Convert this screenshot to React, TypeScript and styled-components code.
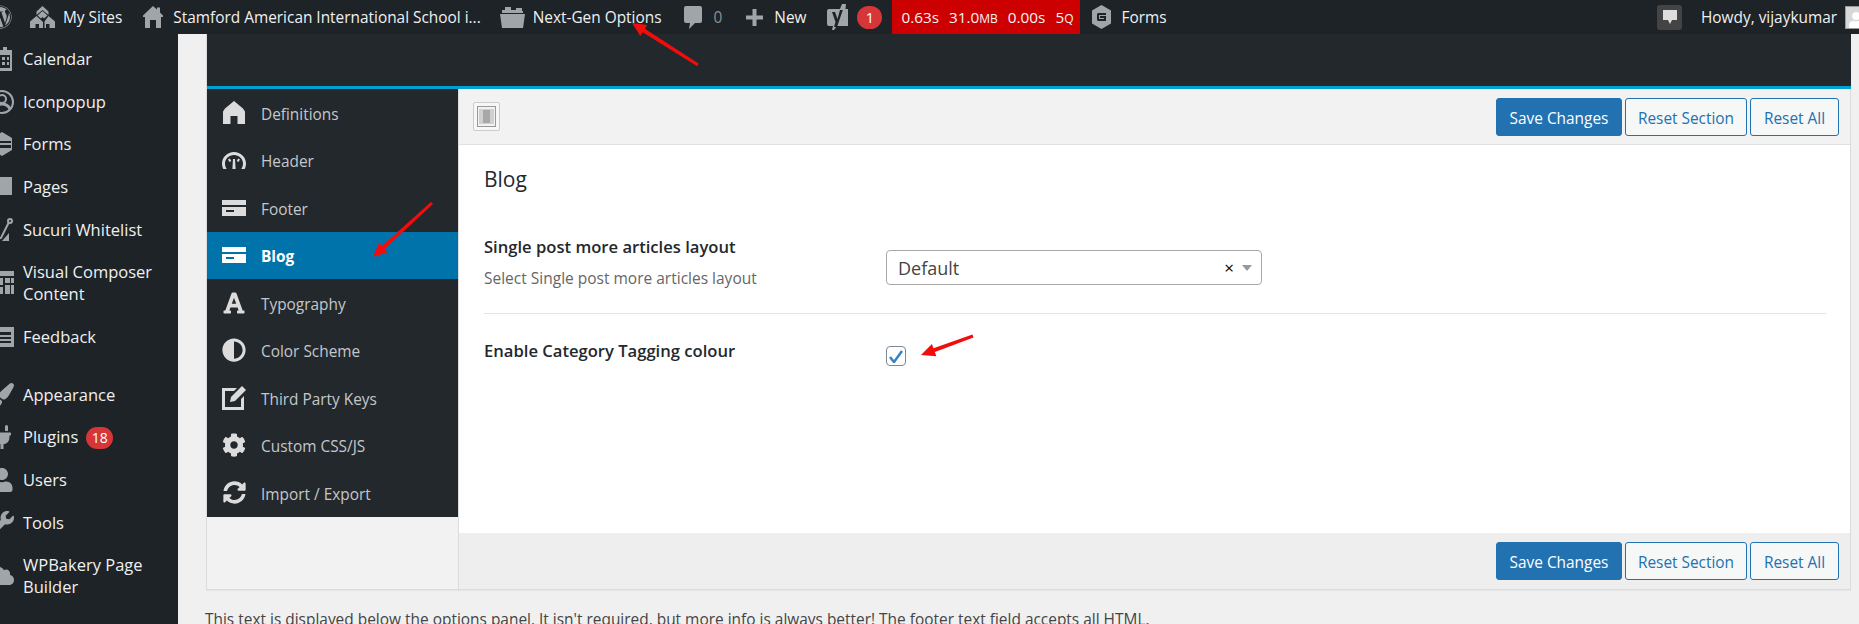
import React from 'react';
import styled, { createGlobalStyle } from 'styled-components';
import { FaWordpress, FaPlug, FaUser, FaWrench, FaCloud, FaPaintBrush, FaCog, FaSyncAlt, FaFont, FaAdjust } from 'react-icons/fa';

const colors = {
    bar: '#1d2327',
    dark: '#23282d',
    grey: '#a0a5aa',
    blue: '#2271b1',
    active: '#0073aa',
    line: '#e0e0e0',
    page: '#f0f0f0',
};

const GlobalStyle = createGlobalStyle`
    html, body {
        margin: 0;
        padding: 0;
        background: ${colors.page};
    }
    * {
        box-sizing: border-box;
    }
`;

const Page = styled.div`
    position: relative;
    width: 1859px;
    height: 624px;
    overflow: hidden;
    display: flex;
    flex-direction: column;
    font-family: "Open Sans", "Noto Sans", sans-serif;
    font-size: 15.4px;
`;

const AdminBar = styled.header`
    height: 34px;
    flex: none;
    display: flex;
    align-items: center;
    background: ${colors.bar};
    color: #f0f0f1;
`;

const BarItem = styled.div<{ $ml?: number; $end?: boolean }>`
    display: flex;
    align-items: center;
    flex: none;
    white-space: nowrap;
    margin-left: ${(p) => (p.$end ? 'auto' : `${p.$ml || 0}px`)};
`;

const BarClip = styled.div`
    width: 12px;
    height: 34px;
    overflow: hidden;
    display: flex;
    align-items: center;
    justify-content: flex-end;
    color: ${colors.grey};
    flex: none;

    svg {
        flex: none;
    }
`;

const BarIcon = styled.svg`
    display: block;
    flex: none;
    fill: ${colors.grey};
`;

const BarText = styled.span<{ $ml?: number; $dim?: boolean }>`
    margin-left: ${(p) => p.$ml || 0}px;
    color: ${(p) => (p.$dim ? '#8c8f94' : '#f0f0f1')};
`;

const CountBadge = styled.span`
    width: 25px;
    height: 23px;
    margin-left: 9px;
    border-radius: 12px;
    background: #d63638;
    color: #fff;
    display: flex;
    align-items: center;
    justify-content: center;
    font-size: 14.5px;
`;

const PerfBox = styled.div`
    width: 188px;
    height: 34px;
    margin-left: 10px;
    padding-left: 9px;
    background: #cc0000;
    display: flex;
    align-items: center;
    flex: none;
    gap: 10px;
    color: #f4f4f4;
    font-size: 15.3px;
    white-space: nowrap;
`;

const SmallCaps = styled.span`
    font-size: 12px;
`;

const ChatButton = styled.div`
    width: 25px;
    height: 25px;
    border-radius: 3px;
    background: #444;
    display: flex;
    align-items: center;
    justify-content: center;
    flex: none;
`;

const Avatar = styled.div`
    width: 14px;
    height: 23px;
    margin-left: 8px;
    flex: none;
    overflow: hidden;
    background: #d8d8d8;
    border: 1px solid #999;
    border-right: none;
    color: #fff;
    display: flex;
    align-items: flex-end;
    padding-left: 2px;

    svg {
        flex: none;
    }
`;

const Layout = styled.div`
    flex: 1;
    display: flex;
    min-height: 0;
`;

const Sidebar = styled.nav`
    width: 178px;
    flex: none;
    background: ${colors.bar};
    padding-top: 4px;
    overflow: hidden;
`;

const SideRow = styled.div<{ $tall?: boolean; $gap?: boolean }>`
    height: ${(p) => (p.$tall ? 65 : 42.6)}px;
    margin-top: ${(p) => (p.$gap ? 15 : 0)}px;
    display: flex;
    align-items: center;
    color: #f0f0f1;
    font-size: 16.5px;
    line-height: 22px;
`;

const SideIcon = styled.div`
    width: 14px;
    height: 24px;
    flex: none;
    overflow: hidden;
    color: ${colors.grey};
    display: flex;
    align-items: center;
    justify-content: flex-end;
    margin-right: 9px;
    align-self: center;

    svg {
        flex: none;
        display: block;
    }
`;

const SideLabel = styled.span`
    width: 140px;
`;

const PluginBadge = styled.span`
    display: inline-flex;
    width: 27px;
    height: 22px;
    margin-left: 8px;
    border-radius: 11px;
    background: #d63638;
    color: #fff;
    font-size: 14px;
    align-items: center;
    justify-content: center;
    vertical-align: middle;
`;

const Main = styled.main`
    flex: 1;
    min-width: 0;
    padding: 0 8px 0 28px;
`;

const Panel = styled.section`
    width: 1645px;
    border-bottom: 1px solid #dcdcdc;
    border-left: 1px solid #dcdcdc;
    border-right: 1px solid #dcdcdc;
    box-shadow: 0 1px 1px rgba(0, 0, 0, 0.04);
`;

const PanelHead = styled.div`
    height: 55px;
    margin-right: -1px;
    background: ${colors.dark};
    border-bottom: 3px solid #00a0d2;
`;

const PanelBody = styled.div`
    display: grid;
    grid-template-columns: 252px 1fr;
    height: 500px;
`;

const MenuColumn = styled.div`
    background: #f2f2f2;
    border-right: 1px solid #dcdcdc;
`;

const MenuList = styled.ul`
    margin: 0;
    padding: 0;
    list-style: none;
    background: ${colors.dark};
`;

const MenuItem = styled.li<{ $active?: boolean }>`
    height: 47.5px;
    padding-left: 15px;
    display: flex;
    align-items: center;
    gap: 15px;
    color: ${(p) => (p.$active ? '#fff' : '#c3c7ca')};
    background: ${(p) => (p.$active ? colors.active : 'transparent')};
    font-weight: ${(p) => (p.$active ? 700 : 400)};
    font-size: 15.4px;
`;

const MenuLabel = styled.span`
    padding-top: 3px;
`;

const MenuIcon = styled.div<{ $active?: boolean }>`
    width: 24px;
    height: 24px;
    flex: none;
    display: flex;
    align-items: center;
    justify-content: center;
    color: ${(p) => (p.$active ? '#fff' : '#dcdcdc')};
`;

const OptionsColumn = styled.div`
    display: flex;
    flex-direction: column;
    min-width: 0;
    background: #fff;
`;

const ActionBar = styled.div<{ $bottom?: boolean }>`
    height: 56px;
    flex: none;
    padding: 0 11px 0 14px;
    display: flex;
    align-items: center;
    justify-content: flex-end;
    gap: 3px;
    background: ${(p) => (p.$bottom ? '#eeeeee' : '#f2f2f2')};
    border-bottom: ${(p) => (p.$bottom ? 'none' : `1px solid ${colors.line}`)};
`;

const LayoutToggle = styled.div`
    width: 27px;
    height: 29px;
    margin-right: auto;
    border: 1px solid #ccc;
    border-radius: 2px;
    background: #f7f7f7;
    display: flex;
    align-items: center;
    justify-content: center;
`;

const Button = styled.button<{ $primary?: boolean; $w: number }>`
    width: ${(p) => p.$w}px;
    height: 38px;
    padding: 3px 0 0;
    border: 1px solid ${colors.blue};
    border-radius: 3px;
    background: ${(p) => (p.$primary ? colors.blue : '#f6f7f7')};
    color: ${(p) => (p.$primary ? '#fff' : colors.blue)};
    font-family: inherit;
    font-size: 15.4px;
    cursor: pointer;
`;

const Options = styled.div`
    flex: 1;
    padding: 21px 24px 0 25px;
`;

const SectionTitle = styled.h2`
    margin: 0 0 44px;
    font-size: 21px;
    line-height: 26px;
    font-weight: 500;
    color: #23282d;
`;

const OptionRow = styled.div`
    display: grid;
    grid-template-columns: 402px 1fr;
`;

const FirstRow = styled(OptionRow)`
    height: 78px;
    border-bottom: 1px solid #e5e5e5;
`;

const SecondRow = styled(OptionRow)`
    padding-top: 26px;
`;

const OptionLabel = styled.div`
    font-size: 16.6px;
    font-weight: 600;
    line-height: 22px;
    color: #23282d;
`;

const OptionHint = styled.div`
    margin-top: 10px;
    font-size: 15.5px;
    line-height: 20px;
    color: #666;
`;

const SelectBox = styled.div`
    width: 376px;
    height: 35px;
    margin-top: 14px;
    padding: 0 9px 0 11px;
    border: 1px solid #a8a8a8;
    border-radius: 4px;
    background: #fff;
    display: flex;
    align-items: center;
    color: #444;
    font-size: 18px;
`;

const SelectValue = styled.span`
    flex: 1;
    padding-top: 1px;
`;

const ClearMark = styled.span`
    margin-right: 8px;
    color: #000;
    font-size: 17px;
    line-height: 1;
`;

const Caret = styled.span`
    width: 0;
    height: 0;
    border-left: 5px solid transparent;
    border-right: 5px solid transparent;
    border-top: 6px solid #999;
`;

const Checkbox = styled.div`
    width: 20px;
    height: 20px;
    margin-top: 6px;
    border: 1px solid #7e8993;
    border-radius: 4px;
    background: #fff;
    display: flex;
    align-items: center;
    justify-content: center;
`;

const FooterNote = styled.p`
    margin: 19px 0 0 -1px;
    font-size: 15.45px;
    line-height: 20px;
    color: #444;
    white-space: nowrap;
`;

const Annotations = styled.svg`
    position: absolute;
    top: 0;
    left: 0;
    pointer-events: none;
`;

// red annotation arrow, tapered from the tail to a filled head
const Arrow = ({ tail, tip }: { tail: [number, number]; tip: [number, number] }) => {
    const dx = tip[0] - tail[0];
    const dy = tip[1] - tail[1];
    const len = Math.hypot(dx, dy);
    const ux = dx / len;
    const uy = dy / len;
    const nx = -uy;
    const ny = ux;
    const head = 14;
    const bx = tip[0] - ux * head;
    const by = tip[1] - uy * head;
    const pts = [
        [tail[0] + nx * 1.5, tail[1] + ny * 1.5],
        [bx + nx * 2, by + ny * 2],
        [bx + nx * 6.5, by + ny * 6.5],
        tip,
        [bx - nx * 6.5, by - ny * 6.5],
        [bx - nx * 2, by - ny * 2],
        [tail[0] - nx * 1.5, tail[1] - ny * 1.5],
    ];
    return <polygon points={pts.map((p) => p.join(',')).join(' ')} fill="#f20d0d" />;
};

const CardIcon = () => (
    <svg width="24" height="16" viewBox="0 0 24 16" fill="currentColor">
        <path d="M0 0h24v5H0zM0 7h24v9H0zM4 10v2h8v-2z" fillRule="evenodd" />
    </svg>
);

const menuItems: { label: string; icon: React.ReactNode; active?: boolean }[] = [
    {
        label: 'Definitions',
        icon: (
            <svg width="22" height="23" viewBox="0 0 22 23" fill="currentColor">
                <path d="M11 0l9 7.5 2 3V23h-7.5v-8h-7v8H0V10.500l2-3z" />
            </svg>
        ),
    },
    {
        label: 'Header',
        icon: (
            <svg width="24" height="17" viewBox="0 0 24 17" fill="currentColor">
                <path d="M12 0c6.600 0 12 5.200 12 11.500 0 2-.5 3.800-1.300 5.500h-3.400c1-1.500 1.700-3.400 1.700-5.500C21 6.700 17 3 12 3S3 6.700 3 11.500c0 2.100.7 4 1.700 5.500H1.300C.5 15.300 0 13.500 0 11.500 0 5.200 5.400 0 12 0z" />
                <path d="M11 7h2l.6 10h-3.200zM6 7.500l1.800-1 1.500 2.500-1.800 1zM18 7.500l-1.800-1-1.500 2.500 1.800 1z" />
            </svg>
        ),
    },
    { label: 'Footer', icon: <CardIcon /> },
    { label: 'Blog', icon: <CardIcon />, active: true },
    { label: 'Typography', icon: <FaFont size={24} /> },
    { label: 'Color Scheme', icon: <FaAdjust size={24} /> },
    {
        label: 'Third Party Keys',
        icon: (
            <svg width="24" height="24" viewBox="0 0 24 24" fill="currentColor">
                <path d="M0 2h15l-3 3H3v16h16v-8l3-3v14H0z" />
                <path d="M20 0l4 4-11 11-5 1 1-5z" />
            </svg>
        ),
    },
    { label: 'Custom CSS/JS', icon: <FaCog size={24} /> },
    { label: 'Import / Export', icon: <FaSyncAlt size={23} /> },
];

const sideIcons = {
    calendar: (
        <svg width="24" height="24" viewBox="0 0 24 24" fill="currentColor">
            <path d="M13 0h4v3h5v21H2V3h11zM5 8v13h15V8zM7 10h3v3H7zM12 10h3v3h-3zM17 10h2v3h-2zM7 15h3v3H7zM12 15h3v3h-3zM17 15h2v3h-2z" fillRule="evenodd" />
        </svg>
    ),
    popup: (
        <svg width="24" height="24" viewBox="0 0 24 24" fill="none" stroke="currentColor">
            <circle cx="12" cy="12" r="11" strokeWidth="2" />
            <circle cx="12" cy="9" r="4" strokeWidth="2" />
            <path d="M4 19c2-4 5-5 8-5s6 1 8 5" strokeWidth="3" />
        </svg>
    ),
    forms: (
        <svg width="24" height="24" viewBox="0 0 24 24" fill="currentColor">
            <path d="M12 0l10 6v12l-10 6-10-6V6zM6 9v2h15V9zM6 13v3h15v-3z" fillRule="evenodd" />
        </svg>
    ),
    pages: (
        <svg width="24" height="24" viewBox="0 0 24 24" fill="currentColor">
            <path d="M2 2h20v18H2zM2 21h6v2H2z" />
        </svg>
    ),
    sucuri: (
        <svg width="24" height="24" viewBox="0 0 24 24" fill="none" stroke="currentColor" strokeWidth="2">
            <path d="M0 23l11-3 8-16M4 14l4 6" />
            <circle cx="20" cy="3" r="2" />
            <path d="M0 23h12l7-8v8z" fill="currentColor" stroke="none" />
        </svg>
    ),
    composer: (
        <svg width="24" height="24" viewBox="0 0 24 24" fill="currentColor">
            <path d="M0 0h24v5H0zM0 7h13v7H0zM15 7h5v5h-5zM21 7h3v5h-3zM0 16h13v7H0zM15 14h5v9h-5zM21 14h3v9h-3z" />
        </svg>
    ),
    feedback: (
        <svg width="24" height="24" viewBox="0 0 24 24" fill="currentColor">
            <path d="M1 2h23v20H1zM4 7v3h17V7zM4 12v2h17v-2zM4 16v2h17v-2z" fillRule="evenodd" />
        </svg>
    ),
    bakery: <FaCloud size={26} />,
    next: (
        <svg width="24" height="24" viewBox="0 0 24 24" fill="currentColor">
            <path d="M2 16h20v8H2z" />
        </svg>
    ),
};

const ActionButtons = () => (
    <>
        <Button $primary $w={126}>Save Changes</Button>
        <Button $w={122}>Reset Section</Button>
        <Button $w={89}>Reset All</Button>
    </>
);

const App = () => (
    <Page>
        <GlobalStyle />
        <AdminBar>
            <BarClip>
                <FaWordpress size={24} />
            </BarClip>
            <BarItem $ml={18}>
                <BarIcon width="25" height="22" viewBox="0 0 25 22">
                    <path d="M12.500 0l6 5.500V9l-6-5-6 5V5.500zM12.500 5l5 4.500-3.500 3-1.500-1.500-1.500 1.500-3.500-3zM6.500 10L13 16v6H9v-4H5.500v4H0v-6.500zM18.500 10l6.500 5.500V22h-5.500v-4H16v4h-1.500v-6.500z" />
                </BarIcon>
                <BarText $ml={8}>My Sites</BarText>
            </BarItem>
            <BarItem $ml={21}>
                <BarIcon width="20" height="22" viewBox="0 0 20 22">
                    <path d="M10 0l4 3.500V1.500h3v5l3 3V11h-2v11h-5v-8H7v8H2V11H0V9.500z" />
                </BarIcon>
                <BarText $ml={10}>Stamford American International School i...</BarText>
            </BarItem>
            <BarItem $ml={19}>
                <BarIcon width="25" height="21" viewBox="0 0 25 21">
                    <path d="M2 6V3h3V0h6v3h5V1h6v3h1v2zM0 7h25l-2 14H2z" />
                </BarIcon>
                <BarText $ml={8}>Next-Gen Options</BarText>
            </BarItem>
            <BarItem $ml={23}>
                <BarIcon width="18" height="23" viewBox="0 0 18 23">
                    <path d="M2 0h14a2 2 0 0 1 2 2v13a2 2 0 0 1-2 2h-5l-6 6 1-6H2a2 2 0 0 1-2-2V2a2 2 0 0 1 2-2z" />
                </BarIcon>
                <BarText $ml={11} $dim>0</BarText>
            </BarItem>
            <BarItem $ml={24}>
                <BarIcon width="17" height="17" viewBox="0 0 17 17">
                    <path d="M6.500 0h4v6.500H17v4h-6.500V17h-4v-6.500H0v-4h6.500z" />
                </BarIcon>
                <BarText $ml={11}>New</BarText>
            </BarItem>
            <BarItem $ml={21}>
                <BarIcon width="21" height="26" viewBox="0 0 21 26">
                    <path d="M2 5h11l2-5h4l-.500 5H21v17H10l-3 4H5l1-4H2a2 2 0 0 1-2-2V7a2 2 0 0 1 2-2z" />
                    <path d="M5 8h3l2.500 7L13 6h2.800L10 23H7l1.500-5z" fill={colors.bar} />
                </BarIcon>
                <CountBadge>1</CountBadge>
            </BarItem>
            <PerfBox>
                <span>0.63s</span>
                <span>31.0<SmallCaps>MB</SmallCaps></span>
                <span>0.00s</span>
                <span>5<SmallCaps>Q</SmallCaps></span>
            </PerfBox>
            <BarItem $ml={12}>
                <BarIcon width="19" height="24" viewBox="0 0 19 24">
                    <path d="M9.500 0L19 5.500v13L9.500 24 0 18.500v-13zM5 9v6l1 1h8v-5H8v2h4v1H7v-4h7V8H6z" fillRule="evenodd" />
                </BarIcon>
                <BarText $ml={10}>Forms</BarText>
            </BarItem>
            <BarItem $end>
                <ChatButton>
                    <svg width="14" height="14" viewBox="0 0 14 14">
                        <path d="M0 0h14v10H9l-2 4-2-4H0z" fill="#ddd" />
                    </svg>
                </ChatButton>
                <BarText $ml={19}>Howdy, vijaykumar</BarText>
                <Avatar>
                    <FaUser size={16} />
                </Avatar>
            </BarItem>
        </AdminBar>
        <Layout>
            <Sidebar>
                <SideRow><SideIcon>{sideIcons.calendar}</SideIcon><SideLabel>Calendar</SideLabel></SideRow>
                <SideRow><SideIcon>{sideIcons.popup}</SideIcon><SideLabel>Iconpopup</SideLabel></SideRow>
                <SideRow><SideIcon>{sideIcons.forms}</SideIcon><SideLabel>Forms</SideLabel></SideRow>
                <SideRow><SideIcon>{sideIcons.pages}</SideIcon><SideLabel>Pages</SideLabel></SideRow>
                <SideRow><SideIcon>{sideIcons.sucuri}</SideIcon><SideLabel>Sucuri Whitelist</SideLabel></SideRow>
                <SideRow $tall><SideIcon>{sideIcons.composer}</SideIcon><SideLabel>Visual Composer Content</SideLabel></SideRow>
                <SideRow><SideIcon>{sideIcons.feedback}</SideIcon><SideLabel>Feedback</SideLabel></SideRow>
                <SideRow $gap><SideIcon><FaPaintBrush size={24} /></SideIcon><SideLabel>Appearance</SideLabel></SideRow>
                <SideRow>
                    <SideIcon><FaPlug size={24} /></SideIcon>
                    <SideLabel>Plugins<PluginBadge>18</PluginBadge></SideLabel>
                </SideRow>
                <SideRow><SideIcon><FaUser size={24} /></SideIcon><SideLabel>Users</SideLabel></SideRow>
                <SideRow><SideIcon><FaWrench size={24} /></SideIcon><SideLabel>Tools</SideLabel></SideRow>
                <SideRow $tall><SideIcon>{sideIcons.bakery}</SideIcon><SideLabel>WPBakery Page Builder</SideLabel></SideRow>
                <SideRow><SideIcon>{sideIcons.next}</SideIcon></SideRow>
            </Sidebar>
            <Main>
                <Panel>
                    <PanelHead />
                    <PanelBody>
                        <MenuColumn>
                            <MenuList>
                                {menuItems.map((item) => (
                                    <MenuItem key={item.label} $active={item.active}>
                                        <MenuIcon $active={item.active}>{item.icon}</MenuIcon>
                                        <MenuLabel>{item.label}</MenuLabel>
                                    </MenuItem>
                                ))}
                            </MenuList>
                        </MenuColumn>
                        <OptionsColumn>
                            <ActionBar>
                                <LayoutToggle>
                                    <svg width="19" height="21" viewBox="0 0 19 21">
                                        <rect x="0.500" y="0.500" width="18" height="20" fill="#f2f2f2" stroke="#999" />
                                        <rect x="2" y="3" width="15" height="15" fill="#d0d0d0" />
                                        <rect x="6" y="4" width="7" height="13" fill="#a8a8a8" />
                                    </svg>
                                </LayoutToggle>
                                <ActionButtons />
                            </ActionBar>
                            <Options>
                                <SectionTitle>Blog</SectionTitle>
                                <FirstRow>
                                    <div>
                                        <OptionLabel>Single post more articles layout</OptionLabel>
                                        <OptionHint>Select Single post more articles layout</OptionHint>
                                    </div>
                                    <SelectBox>
                                        <SelectValue>Default</SelectValue>
                                        <ClearMark>×</ClearMark>
                                        <Caret />
                                    </SelectBox>
                                </FirstRow>
                                <SecondRow>
                                    <OptionLabel>Enable Category Tagging colour</OptionLabel>
                                    <Checkbox>
                                        <svg width="14" height="13" viewBox="0 0 14 13">
                                            <path d="M1 7l4 5L13 1" fill="none" stroke="#3582c4" strokeWidth="2.500" />
                                        </svg>
                                    </Checkbox>
                                </SecondRow>
                            </Options>
                            <ActionBar $bottom>
                                <ActionButtons />
                            </ActionBar>
                        </OptionsColumn>
                    </PanelBody>
                </Panel>
                <FooterNote>
                    This text is displayed below the options panel. It isn't required, but more info is always better! The footer text field accepts all HTML.
                </FooterNote>
            </Main>
        </Layout>
        <Annotations width="1859" height="624" viewBox="0 0 1859 624">
            <Arrow tail={[698, 65]} tip={[632, 23]} />
            <Arrow tail={[432, 203]} tip={[373, 257]} />
            <Arrow tail={[973, 336]} tip={[921, 355]} />
        </Annotations>
    </Page>
);

export default App;
